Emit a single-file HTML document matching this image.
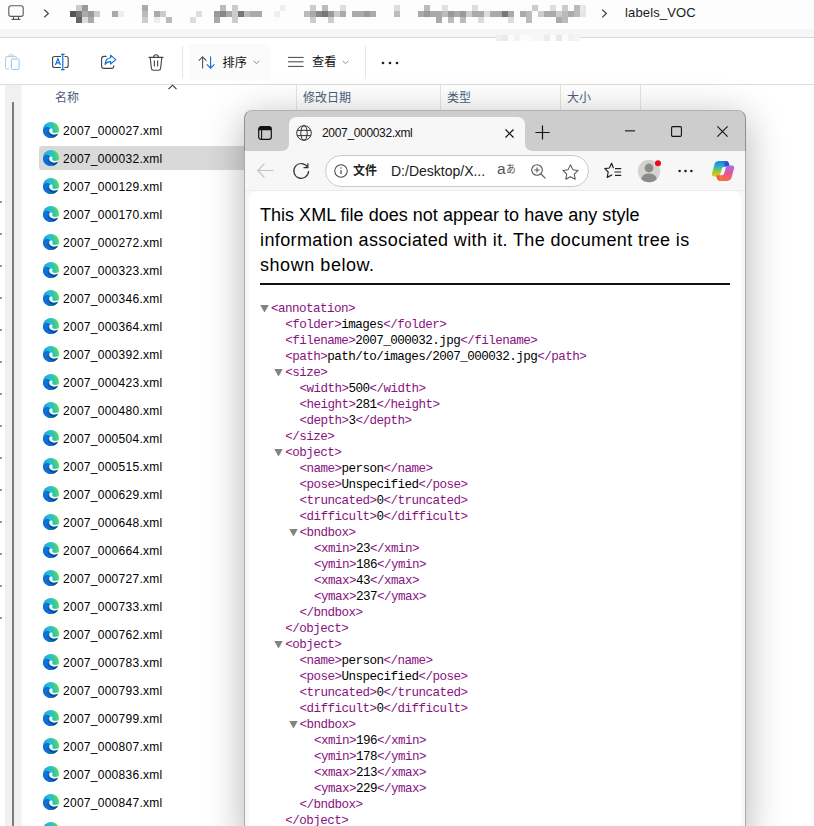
<!DOCTYPE html>
<html><head><meta charset="utf-8"><title>labels_VOC</title>
<style>
html,body{margin:0;padding:0}
html{width:814px;height:826px;overflow:hidden;background:#fff}
body{width:814px;height:826px;overflow:hidden;background:#fff;position:relative;font-family:"Liberation Sans",sans-serif;color:#000}
.abs{position:absolute;display:block}
#crumb i{position:absolute;width:6px;height:6px;display:block}
.fn{position:absolute;left:63px;font-size:12px;line-height:18px;height:18px;white-space:nowrap;color:#000;letter-spacing:.27px}
.xl{position:absolute;font-family:"Liberation Mono",monospace;font-size:12.6px;letter-spacing:-.56px;line-height:16px;height:16px;white-space:pre;color:#000}
.xl b{font-weight:normal;color:#881280}
.dot{position:absolute;left:0;width:2px;height:2px;background:#8c98a4;display:block}
.vsep{position:absolute;width:1px;background:#e5e5e5}
.cjk{font-family:"Liberation Sans","Noto Sans CJK SC",sans-serif;white-space:nowrap}
</style></head><body>
<div id="root" style="position:absolute;left:0;top:0;width:814px;height:826px;overflow:hidden;background:#fff">
<svg width="0" height="0" style="position:absolute"><defs>
<linearGradient id="eg1" x1="0" y1="0.65" x2="1" y2="0.38"><stop offset="0" stop-color="#1583dc"/><stop offset=".4" stop-color="#27b6e2"/><stop offset=".68" stop-color="#2cc4b8"/><stop offset="1" stop-color="#5fe03c"/></linearGradient>
<linearGradient id="eg2" x1="0" y1="0" x2="1" y2="1"><stop offset="0" stop-color="#1565c0"/><stop offset=".6" stop-color="#0c4c9c"/><stop offset="1" stop-color="#0a3a88"/></linearGradient>
<symbol id="edge" viewBox="0 0 16 16">
<circle cx="8" cy="8" r="8" fill="url(#eg1)"/>
<path d="M0 8.6C0.300 5.600 3.400 4.200 6 5.200C4.800 6.400 4.400 8.400 5 10.400C5.800 13.200 8.200 15 11.400 15.200C10.400 15.800 9.200 16 8 16C3.400 16 -0.200 12.400 0 8.600Z" fill="#0f6fd2"/>
<path d="M5.600 5.600C4.400 7.200 4.200 9.600 5.200 11.600C6.400 14 8.800 15.400 11.600 15.200C13.200 14.600 14.400 13.200 15 11.500C13 12.700 10.400 12.700 8.700 11.900C6.900 11 6.100 9.800 6.100 8.400C6.100 7.600 6.400 7 6.900 6.600Z" fill="url(#eg2)"/>
<path d="M6.200 8.400C6.200 7 7.400 6.300 8.600 6.500C9.400 6.700 9.700 7.200 9.400 8C9 9 9 9.800 10 10.500C11.500 11.400 14 11 15.700 9.900C15.500 10.700 15.200 11.300 14.900 11.600C13 12.700 10.500 12.700 8.800 11.900C7 11 6.200 9.800 6.200 8.400Z" fill="#fff"/>
</symbol></defs></svg>

<!-- ===== Explorer ===== -->
<div class="abs" style="left:0;top:0;width:814px;height:29px;background:#fdfdfd"></div><div class="abs" style="left:0;top:29px;width:814px;height:8px;background:#f6f6f6"></div>
<div class="abs" style="left:0;top:37px;width:814px;height:1px;background:#dadada"></div>
<div class="abs" style="left:0;top:84px;width:814px;height:1px;background:#dddddd"></div>
<div class="abs" style="left:496px;top:35px;width:84px;height:6px;background:#fcfcfc"></div><div class="abs" style="left:496px;top:35px;width:6px;height:6px;background:#efefef"></div><div class="abs" style="left:502px;top:35px;width:6px;height:6px;background:#eaeaea"></div><div class="abs" style="left:514px;top:35px;width:6px;height:6px;background:#f3f3f3"></div><div class="abs" style="left:532px;top:35px;width:6px;height:6px;background:#f7f7f7"></div><div class="abs" style="left:538px;top:35px;width:6px;height:6px;background:#f7f7f7"></div><div class="abs" style="left:544px;top:35px;width:6px;height:6px;background:#ececec"></div><div class="abs" style="left:556px;top:35px;width:6px;height:6px;background:#e8e8e8"></div><div class="abs" style="left:568px;top:35px;width:6px;height:6px;background:#f1f1f1"></div><div class="abs" style="left:574px;top:35px;width:6px;height:6px;background:#f5f5f5"></div>
<div id="crumb"><i style="left:76px;top:5px;background:#ccc"></i><i style="left:82px;top:5px;background:#999"></i><i style="left:142px;top:5px;background:#aaa"></i><i style="left:220px;top:5px;background:#bbb"></i><i style="left:232px;top:5px;background:#ccc"></i><i style="left:280px;top:5px;background:#f0f0f0"></i><i style="left:310px;top:5px;background:#ccc"></i><i style="left:322px;top:5px;background:#bbb"></i><i style="left:340px;top:5px;background:#ddd"></i><i style="left:394px;top:5px;background:#ddd"></i><i style="left:424px;top:5px;background:#bbb"></i><i style="left:442px;top:5px;background:#e0e0e0"></i><i style="left:472px;top:5px;background:#ddd"></i><i style="left:532px;top:5px;background:#ccc"></i><i style="left:550px;top:5px;background:#ddd"></i><i style="left:562px;top:5px;background:#ccc"></i><i style="left:574px;top:5px;background:#bbb"></i><i style="left:580px;top:5px;background:#e8e8e8"></i><i style="left:70px;top:11px;background:#555"></i><i style="left:76px;top:11px;background:#777"></i><i style="left:82px;top:11px;background:#aaa"></i><i style="left:88px;top:11px;background:#999"></i><i style="left:94px;top:11px;background:#ccc"></i><i style="left:112px;top:11px;background:#aaa"></i><i style="left:118px;top:11px;background:#eee"></i><i style="left:142px;top:11px;background:#bbb"></i><i style="left:154px;top:11px;background:#aaa"></i><i style="left:160px;top:11px;background:#ccc"></i><i style="left:196px;top:11px;background:#ddd"></i><i style="left:214px;top:11px;background:#999"></i><i style="left:220px;top:11px;background:#888"></i><i style="left:226px;top:11px;background:#aaa"></i><i style="left:232px;top:11px;background:#ccc"></i><i style="left:238px;top:11px;background:#777"></i><i style="left:244px;top:11px;background:#bbb"></i><i style="left:250px;top:11px;background:#aaa"></i><i style="left:256px;top:11px;background:#aaa"></i><i style="left:274px;top:11px;background:#eee"></i><i style="left:304px;top:11px;background:#bbb"></i><i style="left:310px;top:11px;background:#aaa"></i><i style="left:316px;top:11px;background:#888"></i><i style="left:322px;top:11px;background:#777"></i><i style="left:328px;top:11px;background:#999"></i><i style="left:334px;top:11px;background:#ccc"></i><i style="left:340px;top:11px;background:#aaa"></i><i style="left:352px;top:11px;background:#aaa"></i><i style="left:358px;top:11px;background:#aaa"></i><i style="left:364px;top:11px;background:#999"></i><i style="left:370px;top:11px;background:#aaa"></i><i style="left:394px;top:11px;background:#bbb"></i><i style="left:418px;top:11px;background:#aaa"></i><i style="left:424px;top:11px;background:#999"></i><i style="left:430px;top:11px;background:#aaa"></i><i style="left:436px;top:11px;background:#aaa"></i><i style="left:442px;top:11px;background:#bbb"></i><i style="left:448px;top:11px;background:#999"></i><i style="left:454px;top:11px;background:#aaa"></i><i style="left:460px;top:11px;background:#999"></i><i style="left:466px;top:11px;background:#ccc"></i><i style="left:472px;top:11px;background:#aaa"></i><i style="left:478px;top:11px;background:#aaa"></i><i style="left:484px;top:11px;background:#ddd"></i><i style="left:490px;top:11px;background:#aaa"></i><i style="left:496px;top:11px;background:#aaa"></i><i style="left:502px;top:11px;background:#777"></i><i style="left:508px;top:11px;background:#aaa"></i><i style="left:520px;top:11px;background:#aaa"></i><i style="left:526px;top:11px;background:#bbb"></i><i style="left:538px;top:11px;background:#ccc"></i><i style="left:544px;top:11px;background:#aaa"></i><i style="left:550px;top:11px;background:#aaa"></i><i style="left:556px;top:11px;background:#ccc"></i><i style="left:562px;top:11px;background:#bbb"></i><i style="left:568px;top:11px;background:#aaa"></i><i style="left:574px;top:11px;background:#bbb"></i><i style="left:580px;top:11px;background:#e5e5e5"></i><i style="left:76px;top:17px;background:#666"></i><i style="left:82px;top:17px;background:#ddd"></i><i style="left:88px;top:17px;background:#aaa"></i><i style="left:142px;top:17px;background:#ccc"></i><i style="left:154px;top:17px;background:#eee"></i><i style="left:166px;top:17px;background:#bbb"></i><i style="left:190px;top:17px;background:#ddd"></i><i style="left:214px;top:17px;background:#aaa"></i><i style="left:232px;top:17px;background:#ccc"></i><i style="left:310px;top:17px;background:#ccc"></i><i style="left:328px;top:17px;background:#ccc"></i><i style="left:436px;top:17px;background:#aaa"></i><i style="left:448px;top:17px;background:#bbb"></i><i style="left:460px;top:17px;background:#bbb"></i><i style="left:478px;top:17px;background:#ddd"></i><i style="left:508px;top:17px;background:#ddd"></i><i style="left:526px;top:17px;background:#bbb"></i><i style="left:556px;top:17px;background:#aaa"></i><i style="left:562px;top:17px;background:#bbb"></i></div>
<!-- monitor icon -->
<svg class="abs" style="left:8px;top:5px" width="16" height="16" viewBox="0 0 16 16" fill="none" stroke="#5a5a5a" stroke-width="1.1"><rect x="0.8" y="0.8" width="14.4" height="10.6" rx="2.2"/><path d="M5.5 11.6V14M10.5 11.6V14M3.6 14.4H12.4"/></svg>
<svg class="abs" style="left:43px;top:9px" width="7" height="9" viewBox="0 0 7 9" fill="none" stroke="#333" stroke-width="1.1"><path d="M1.2 0.6L5.4 4.5L1.2 8.4"/></svg>
<svg class="abs" style="left:601px;top:9px" width="7" height="9" viewBox="0 0 7 9" fill="none" stroke="#333" stroke-width="1.1"><path d="M1.2 0.6L5.4 4.5L1.2 8.4"/></svg>
<div class="abs" style="left:625px;top:4px;font-size:13px;line-height:18px;color:#1b1b1b;white-space:nowrap;letter-spacing:.15px">labels_VOC</div>

<!-- toolbar icons -->
<svg class="abs" style="left:5px;top:54px" width="15" height="16" viewBox="0 0 15 16" fill="none" stroke-width="1"><path d="M4 2.5H2.2Q0.6 2.5 0.6 4.1V13.4Q0.6 15 2.2 15H4" stroke="#c4c4c4"/><path d="M3.6 2.6Q3.6 0.8 5.4 0.8H7Q8.8 0.8 8.8 2.6Z" stroke="#c4c4c4"/><path d="M9 2.5H10.2Q11.6 2.5 11.6 4" stroke="#c4c4c4"/><rect x="6.300" y="5" width="7.800" height="10.400" rx="1.2" stroke="#93c4ee" fill="#fff"/></svg>
<svg class="abs" style="left:52px;top:53px" width="17" height="18" viewBox="0 0 17 18" fill="none"><path d="M9 3.5H2.6Q0.6 3.5 0.6 5.5V12.5Q0.6 14.5 2.6 14.5H9M12.5 3.5H14.2Q16.2 3.5 16.2 5.5V12.5Q16.2 14.5 14.2 14.5H12.5" stroke="#444" stroke-width="1.1"/><path d="M10.8 1.6V16.400M9 1.4H12.6M9 16.600H12.6" stroke="#0a6fd6" stroke-width="1.2"/><path d="M3.4 12L5.9 5.6L8.4 12M4.3 9.9H7.5" stroke="#0a6fd6" stroke-width="1.1"/></svg>
<svg class="abs" style="left:101px;top:54px" width="16" height="16" viewBox="0 0 16 16" fill="none"><path d="M5.4 2.4H3Q0.6 2.4 0.6 4.8V12Q0.6 14.4 3 14.4H10.4Q12.8 14.4 12.8 12V11.4" stroke="#444" stroke-width="1.1"/><path d="M9.6 1.2L14.8 5.6L9.6 10V7.6Q5.8 7.4 4 10.4Q4.4 4.4 9.6 3.8Z" stroke="#0a6fd6" stroke-width="1.1" stroke-linejoin="round"/></svg>
<svg class="abs" style="left:148px;top:54px" width="16" height="17" viewBox="0 0 16 17" fill="none" stroke="#444" stroke-width="1.1"><path d="M0.6 3.4H15.4M5.6 3.2Q5.6 0.8 8 0.8Q10.4 0.8 10.4 3.2M2.2 3.6L3.4 14.4Q3.6 16.2 5.4 16.2H10.6Q12.4 16.2 12.6 14.4L13.8 3.6M6.4 6.6V12.6M9.6 6.6V12.6"/></svg>
<div class="vsep" style="left:182px;top:46px;height:32px"></div>
<div class="abs" style="left:189px;top:44px;width:82px;height:36px;background:#fbfbfb;border-radius:4px"></div>
<svg class="abs" style="left:198px;top:56px" width="18" height="13" viewBox="0 0 18 13" fill="none" stroke-width="1.1"><path d="M4.6 12.4V1M0.8 4.6L4.6 0.8L8.4 4.6" stroke="#555"/><path d="M12.6 0.6V12M8.8 8.4L12.6 12.2L16.4 8.4" stroke="#0a6fd6"/></svg>
<div class="abs cjk" style="left:222.6px;top:55.6px;font-size:12.2px;line-height:14.64px;height:14.64px;color:#111">排序</div>
<svg class="abs" style="left:253px;top:60px" width="7" height="5" viewBox="0 0 7 5" fill="none" stroke="#8a8a8a" stroke-width="1"><path d="M0.6 0.8L3.5 3.7L6.4 0.8"/></svg>
<svg class="abs" style="left:288px;top:56px" width="16" height="11" viewBox="0 0 16 11" fill="none" stroke="#444" stroke-width="1"><path d="M0 1.4H15.6M0 5.800H15.6M0 10.400H15.6"/></svg>
<div class="abs cjk" style="left:312px;top:55.4px;font-size:12.2px;line-height:14.64px;height:14.64px;color:#111">查看</div>
<svg class="abs" style="left:342px;top:60px" width="7" height="5" viewBox="0 0 7 5" fill="none" stroke="#8a8a8a" stroke-width="1"><path d="M0.6 0.8L3.5 3.7L6.4 0.8"/></svg>
<div class="vsep" style="left:365px;top:46px;height:32px"></div>
<svg class="abs" style="left:381px;top:61px" width="18" height="4" viewBox="0 0 18 4" fill="#222"><circle cx="2" cy="2" r="1.35"/><circle cx="9" cy="2" r="1.35"/><circle cx="16" cy="2" r="1.35"/></svg>

<!-- left nav strip -->
<div class="abs" style="left:5px;top:85px;width:16px;height:741px;background:#f0f0f0"></div>
<div class="abs" style="left:21px;top:85px;width:2px;height:741px;background:#fafafa"></div>
<div class="abs" style="left:12px;top:102px;width:2px;height:724px;background:#7b7b7b"></div>
<i class="dot" style="top:201px"></i><i class="dot" style="top:233px"></i><i class="dot" style="top:265px"></i><i class="dot" style="top:297px"></i><i class="dot" style="top:329px"></i><i class="dot" style="top:361px"></i><i class="dot" style="top:393px"></i><i class="dot" style="top:425px"></i><i class="dot" style="top:457px"></i><i class="dot" style="top:489px"></i><i class="dot" style="top:521px"></i><i class="dot" style="top:553px"></i><i class="dot" style="top:585px"></i><i class="dot" style="top:617px"></i>

<!-- column header -->
<svg class="abs" style="left:168px;top:84px" width="9" height="6" viewBox="0 0 9 6" fill="none" stroke="#333" stroke-width="1.1"><path d="M0.5 5.2L4.5 1.2L8.5 5.2"/></svg>
<div class="abs cjk" style="left:55px;top:91.2px;font-size:12px;line-height:14.4px;height:14.4px;color:#4c607a">名称</div>
<div class="abs cjk" style="left:303px;top:91.2px;font-size:12px;line-height:14.4px;height:14.4px;color:#4c607a">修改日期</div>
<div class="abs cjk" style="left:447px;top:91.2px;font-size:12px;line-height:14.4px;height:14.4px;color:#4c607a">类型</div>
<div class="abs cjk" style="left:567px;top:91.2px;font-size:12px;line-height:14.4px;height:14.4px;color:#4c607a">大小</div>
<div class="vsep" style="left:296px;top:85px;height:26px"></div>
<div class="vsep" style="left:440px;top:85px;height:26px"></div>
<div class="vsep" style="left:560px;top:85px;height:26px"></div>
<div class="vsep" style="left:640px;top:85px;height:26px"></div>

<!-- file rows -->
<div class="abs" style="left:39px;top:146px;width:220px;height:24px;background:#d9d9d9;border-radius:3px"></div>
<svg class="abs" style="left:43px;top:122px" width="16" height="16" viewBox="0 0 16 16"><use href="#edge"/></svg><div class="fn" style="top:122px">2007_000027.xml</div><svg class="abs" style="left:43px;top:150px" width="16" height="16" viewBox="0 0 16 16"><use href="#edge"/></svg><div class="fn" style="top:150px">2007_000032.xml</div><svg class="abs" style="left:43px;top:178px" width="16" height="16" viewBox="0 0 16 16"><use href="#edge"/></svg><div class="fn" style="top:178px">2007_000129.xml</div><svg class="abs" style="left:43px;top:206px" width="16" height="16" viewBox="0 0 16 16"><use href="#edge"/></svg><div class="fn" style="top:206px">2007_000170.xml</div><svg class="abs" style="left:43px;top:234px" width="16" height="16" viewBox="0 0 16 16"><use href="#edge"/></svg><div class="fn" style="top:234px">2007_000272.xml</div><svg class="abs" style="left:43px;top:262px" width="16" height="16" viewBox="0 0 16 16"><use href="#edge"/></svg><div class="fn" style="top:262px">2007_000323.xml</div><svg class="abs" style="left:43px;top:290px" width="16" height="16" viewBox="0 0 16 16"><use href="#edge"/></svg><div class="fn" style="top:290px">2007_000346.xml</div><svg class="abs" style="left:43px;top:318px" width="16" height="16" viewBox="0 0 16 16"><use href="#edge"/></svg><div class="fn" style="top:318px">2007_000364.xml</div><svg class="abs" style="left:43px;top:346px" width="16" height="16" viewBox="0 0 16 16"><use href="#edge"/></svg><div class="fn" style="top:346px">2007_000392.xml</div><svg class="abs" style="left:43px;top:374px" width="16" height="16" viewBox="0 0 16 16"><use href="#edge"/></svg><div class="fn" style="top:374px">2007_000423.xml</div><svg class="abs" style="left:43px;top:402px" width="16" height="16" viewBox="0 0 16 16"><use href="#edge"/></svg><div class="fn" style="top:402px">2007_000480.xml</div><svg class="abs" style="left:43px;top:430px" width="16" height="16" viewBox="0 0 16 16"><use href="#edge"/></svg><div class="fn" style="top:430px">2007_000504.xml</div><svg class="abs" style="left:43px;top:458px" width="16" height="16" viewBox="0 0 16 16"><use href="#edge"/></svg><div class="fn" style="top:458px">2007_000515.xml</div><svg class="abs" style="left:43px;top:486px" width="16" height="16" viewBox="0 0 16 16"><use href="#edge"/></svg><div class="fn" style="top:486px">2007_000629.xml</div><svg class="abs" style="left:43px;top:514px" width="16" height="16" viewBox="0 0 16 16"><use href="#edge"/></svg><div class="fn" style="top:514px">2007_000648.xml</div><svg class="abs" style="left:43px;top:542px" width="16" height="16" viewBox="0 0 16 16"><use href="#edge"/></svg><div class="fn" style="top:542px">2007_000664.xml</div><svg class="abs" style="left:43px;top:570px" width="16" height="16" viewBox="0 0 16 16"><use href="#edge"/></svg><div class="fn" style="top:570px">2007_000727.xml</div><svg class="abs" style="left:43px;top:598px" width="16" height="16" viewBox="0 0 16 16"><use href="#edge"/></svg><div class="fn" style="top:598px">2007_000733.xml</div><svg class="abs" style="left:43px;top:626px" width="16" height="16" viewBox="0 0 16 16"><use href="#edge"/></svg><div class="fn" style="top:626px">2007_000762.xml</div><svg class="abs" style="left:43px;top:654px" width="16" height="16" viewBox="0 0 16 16"><use href="#edge"/></svg><div class="fn" style="top:654px">2007_000783.xml</div><svg class="abs" style="left:43px;top:682px" width="16" height="16" viewBox="0 0 16 16"><use href="#edge"/></svg><div class="fn" style="top:682px">2007_000793.xml</div><svg class="abs" style="left:43px;top:710px" width="16" height="16" viewBox="0 0 16 16"><use href="#edge"/></svg><div class="fn" style="top:710px">2007_000799.xml</div><svg class="abs" style="left:43px;top:738px" width="16" height="16" viewBox="0 0 16 16"><use href="#edge"/></svg><div class="fn" style="top:738px">2007_000807.xml</div><svg class="abs" style="left:43px;top:766px" width="16" height="16" viewBox="0 0 16 16"><use href="#edge"/></svg><div class="fn" style="top:766px">2007_000836.xml</div><svg class="abs" style="left:43px;top:794px" width="16" height="16" viewBox="0 0 16 16"><use href="#edge"/></svg><div class="fn" style="top:794px">2007_000847.xml</div><svg class="abs" style="left:43px;top:822px" width="16" height="16" viewBox="0 0 16 16"><use href="#edge"/></svg><div class="fn" style="top:822px">2007_000876.xml</div>

<!-- ===== Edge window ===== -->
<div id="edge-win" class="abs" style="left:244px;top:110px;width:502px;height:730px;border-radius:8px 8px 0 0;background:#f7f7f7;box-shadow:0 8px 38px rgba(0,0,0,.30);overflow:hidden">
  <div class="abs" style="left:0;top:0;width:502px;height:41px;background:#cdcdcd"></div>
  <!-- tab -->
  <svg class="abs" style="left:37px;top:7px" width="252" height="34" viewBox="0 0 252 34"><path d="M0 34Q8 34 8 26V8Q8 0 16 0H236Q244 0 244 8V26Q244 34 252 34Z" fill="#f7f7f7"/></svg>
  <!-- tab actions icon -->
  <svg class="abs" style="left:14px;top:16px" width="14" height="14" viewBox="0 0 14 14" fill="none" stroke="#111" stroke-width="1.2"><rect x="0.7" y="0.7" width="12.6" height="12.6" rx="2.4"/><path d="M1 2.6H13" stroke-width="3.4"/><path d="M3.6 3V13.2" stroke-width="1.1"/></svg>
  <!-- globe -->
  <svg class="abs" style="left:52px;top:15px" width="16" height="16" viewBox="0 0 16 16" fill="none" stroke="#333" stroke-width="1"><circle cx="8" cy="8" r="7.3"/><ellipse cx="8" cy="8" rx="3.2" ry="7.3"/><path d="M1.2 5.4H14.8M1.2 10.6H14.8"/></svg>
  <div class="abs" style="left:78px;top:14px;font-size:12px;line-height:18px;color:#111;white-space:nowrap;letter-spacing:-.33px">2007_000032.xml</div>
  <svg class="abs" style="left:261px;top:19px" width="9" height="9" viewBox="0 0 9 9" fill="none" stroke="#111" stroke-width="1.2"><path d="M0.5 0.5L8.5 8.5M8.5 0.5L0.5 8.5"/></svg>
  <svg class="abs" style="left:291px;top:15px" width="15" height="15" viewBox="0 0 15 15" fill="none" stroke="#111" stroke-width="1.2"><path d="M7.5 0.4V14.6M0.4 7.5H14.6"/></svg>
  <svg class="abs" style="left:381px;top:20px" width="10" height="2" viewBox="0 0 10 2"><rect width="10" height="1.1" y="0.3" fill="#111"/></svg>
  <svg class="abs" style="left:426.500px;top:15.500px" width="11" height="11" viewBox="0 0 11 11" fill="none" stroke="#111" stroke-width="1.1"><rect x="0.6" y="0.6" width="9.8" height="9.8" rx="1.2"/></svg>
  <svg class="abs" style="left:472.500px;top:15.500px" width="11" height="11" viewBox="0 0 11 11" fill="none" stroke="#111" stroke-width="1.1"><path d="M0.4 0.4L10.6 10.6M10.6 0.4L0.4 10.6"/></svg>
  <!-- nav -->
  <svg class="abs" style="left:13px;top:53px" width="17" height="15" viewBox="0 0 17 15" fill="none" stroke="#c3c3c3" stroke-width="1.2"><path d="M7.4 0.6L0.8 7.5L7.4 14.4M0.8 7.5H16.6"/></svg>
  <svg class="abs" style="left:48px;top:52px" width="18" height="18" viewBox="0 0 18 18" fill="none" stroke="#333" stroke-width="1.2"><path d="M15.6 5.2A7.4 7.4 0 1 0 16.6 9"/><path d="M15.9 1.2V5.6H11.5"/></svg>
  <!-- address pill -->
  <div class="abs" style="left:81px;top:45px;width:262px;height:30px;border:1px solid #c9c9c9;border-radius:16px;background:#fff"></div>
  <svg class="abs" style="left:89.500px;top:54px" width="14" height="14" viewBox="0 0 15 15" fill="none" stroke="#444" stroke-width="1.1"><circle cx="7.5" cy="7.5" r="6.7"/><path d="M7.5 6.6V10.8" stroke-width="1.3"/><circle cx="7.5" cy="4.4" r="0.8" fill="#444" stroke="none"/></svg>
  <div class="abs cjk" style="left:109px;top:53.6px;font-size:12px;line-height:14.4px;height:14.4px;font-weight:bold;color:#222">文件</div>
  <div class="abs" style="left:147px;top:51px;font-size:14px;line-height:20px;color:#1b1b1b;white-space:nowrap">D:/Desktop/X...</div>
  <div class="abs" style="left:252.9px;top:50.3px;font-size:15.5px;line-height:18.6px;height:18.6px;color:#555;white-space:nowrap">a</div><div class="abs" style="left:262.2px;top:53.3px;font-family:'Liberation Sans','Noto Sans CJK JP',sans-serif;font-size:11.5px;line-height:13.8px;height:13.8px;color:#555;white-space:nowrap;transform:scaleX(.85);transform-origin:0 0">あ</div>
  <svg class="abs" style="left:287px;top:54px" width="15" height="15" viewBox="0 0 15 15" fill="none" stroke="#555" stroke-width="1.1"><circle cx="6" cy="6" r="5.3"/><path d="M10 10L14.4 14.4M3.4 6H8.6M6 3.4V8.6"/></svg>
  <svg class="abs" style="left:317.500px;top:53.500px" width="17" height="16" viewBox="0 0 18 17" fill="none" stroke="#555" stroke-width="1.1" stroke-linejoin="round"><path d="M9 0.9L11.5 6L17.1 6.8L13 10.7L14 16.2L9 13.6L4 16.2L5 10.7L0.9 6.8L6.5 6Z"/></svg>
  <!-- favorites -->
  <svg class="abs" style="left:360px;top:52px" width="18" height="17" viewBox="0 0 18 17" fill="none" stroke="#222" stroke-width="1.2" stroke-linejoin="round"><path d="M9.5 6.2L7.6 1.2L5.4 6L0.8 6.6L4.2 10L3.2 15.4L8.2 12.8"/><path d="M11 6.6H17.2M10.4 10H17.2M11 13.4H17.2" stroke-width="1.1"/></svg>
  <!-- avatar -->
  <svg class="abs" style="left:393px;top:49px" width="24" height="24" viewBox="0 0 24 24"><defs><clipPath id="avc"><circle cx="12" cy="12" r="11.2"/></clipPath></defs><circle cx="12" cy="12" r="11.2" fill="#d5d3d1"/><g clip-path="url(#avc)" fill="#8d8b89"><circle cx="12" cy="9" r="4.4"/><path d="M3.6 24Q3.6 14.6 12 14.6Q20.400 14.6 20.400 24Z"/></g><circle cx="21" cy="4.300" r="3" fill="#ea0a1e"/></svg>
  <svg class="abs" style="left:434px;top:59px" width="15" height="4" viewBox="0 0 15 4" fill="#222"><circle cx="1.6" cy="2" r="1.3"/><circle cx="7.5" cy="2" r="1.3"/><circle cx="13.400" cy="2" r="1.3"/></svg>
  <!-- copilot -->
  <svg class="abs" style="left:467px;top:50px" width="24" height="22" viewBox="0 0 24 22"><defs>
   <linearGradient id="cp1" x1="0" y1="0" x2="0" y2="1"><stop offset="0" stop-color="#1d7fe8"/><stop offset=".35" stop-color="#27b4c8"/><stop offset=".7" stop-color="#9ccc2e"/><stop offset="1" stop-color="#f7c21d"/></linearGradient>
   <linearGradient id="cp2" x1="0" y1="0" x2="0" y2="1"><stop offset="0" stop-color="#a56cf0"/><stop offset=".5" stop-color="#e0569c"/><stop offset="1" stop-color="#f7703c"/></linearGradient>
   <linearGradient id="cp3" x1="0" y1="0" x2="1" y2="0"><stop offset="0" stop-color="#2f66e0"/><stop offset="1" stop-color="#1747c4"/></linearGradient>
   <linearGradient id="cp4" x1="0" y1="0" x2="1" y2="0"><stop offset="0" stop-color="#f04a2a"/><stop offset="1" stop-color="#f78a3a"/></linearGradient>
  </defs>
  <path d="M8.6 1H14.6Q17 1 17.600 3.400L18.400 6.600H13.600Q11.400 6.600 10.800 8.800L9.200 14.400Q8.600 16.400 6.600 16.400H3Q0.400 16.400 1 13.600L3.400 4.400Q4.200 1 8.600 1Z" fill="url(#cp1)"/>
  <path d="M13.400 1H15Q17.400 1 18 3.400L18.800 6.600H14.200Q13 6.600 12.400 7.400Q13.400 3 13.400 1Z" fill="url(#cp3)"/>
  <path d="M15.400 21H9.400Q7 21 6.400 18.600L5.600 15.400H10.400Q12.600 15.400 13.200 13.200L14.800 7.600Q15.400 5.600 17.400 5.600H21Q23.600 5.600 23 8.400L20.600 17.600Q19.800 21 15.400 21Z" fill="url(#cp2)"/>
  <path d="M10.600 21H9Q6.600 21 6 18.600L5.200 15.400H9.800Q11 15.400 11.600 14.600Q10.600 19 10.600 21Z" fill="url(#cp4)"/>
  </svg>
  <!-- content -->
  <div class="abs" style="left:0;top:80px;width:502px;height:1px;background:#ececec"></div>
  <div class="abs" style="left:5px;top:81px;width:492px;height:660px;background:#fff;border-radius:8px 8px 0 0"></div>
  <div class="abs" style="left:0;top:0;width:500px;height:740px;border:1px solid rgba(0,0,0,.3);border-top-color:rgba(0,0,0,.13);border-radius:8px 8px 0 0"></div>
</div>
<!-- page text (absolute, body coords) -->
<div class="abs" id="msg" style="left:260px;top:203px;width:480px;font-size:18px;line-height:25px;color:#000;letter-spacing:0px"><span style="letter-spacing:.02px">This XML file does not appear to have any style</span><br><span style="letter-spacing:.38px">information associated with it. The document tree is</span><br><span style="letter-spacing:.55px">shown below.</span></div>
<div class="abs" style="left:260px;top:283px;width:470px;height:2px;background:#111"></div>
<svg class="abs" style="left:260.0px;top:304.5px" width="9" height="7.5" viewBox="0 0 9 8"><path d="M0 0H9L4.5 8Z" fill="#838383"/></svg><div class="xl" style="left:271.0px;top:301px"><b>&lt;annotation&gt;</b></div><div class="xl" style="left:285.3px;top:317px"><b>&lt;folder&gt;</b>images<b>&lt;/folder&gt;</b></div><div class="xl" style="left:285.3px;top:333px"><b>&lt;filename&gt;</b>2007_000032.jpg<b>&lt;/filename&gt;</b></div><div class="xl" style="left:285.3px;top:349px"><b>&lt;path&gt;</b>path/to/images/2007_000032.jpg<b>&lt;/path&gt;</b></div><svg class="abs" style="left:274.3px;top:368.5px" width="9" height="7.5" viewBox="0 0 9 8"><path d="M0 0H9L4.5 8Z" fill="#838383"/></svg><div class="xl" style="left:285.3px;top:365px"><b>&lt;size&gt;</b></div><div class="xl" style="left:299.6px;top:381px"><b>&lt;width&gt;</b>500<b>&lt;/width&gt;</b></div><div class="xl" style="left:299.6px;top:397px"><b>&lt;height&gt;</b>281<b>&lt;/height&gt;</b></div><div class="xl" style="left:299.6px;top:413px"><b>&lt;depth&gt;</b>3<b>&lt;/depth&gt;</b></div><div class="xl" style="left:285.3px;top:429px"><b>&lt;/size&gt;</b></div><svg class="abs" style="left:274.3px;top:448.5px" width="9" height="7.5" viewBox="0 0 9 8"><path d="M0 0H9L4.5 8Z" fill="#838383"/></svg><div class="xl" style="left:285.3px;top:445px"><b>&lt;object&gt;</b></div><div class="xl" style="left:299.6px;top:461px"><b>&lt;name&gt;</b>person<b>&lt;/name&gt;</b></div><div class="xl" style="left:299.6px;top:477px"><b>&lt;pose&gt;</b>Unspecified<b>&lt;/pose&gt;</b></div><div class="xl" style="left:299.6px;top:493px"><b>&lt;truncated&gt;</b>0<b>&lt;/truncated&gt;</b></div><div class="xl" style="left:299.6px;top:509px"><b>&lt;difficult&gt;</b>0<b>&lt;/difficult&gt;</b></div><svg class="abs" style="left:288.6px;top:528.5px" width="9" height="7.5" viewBox="0 0 9 8"><path d="M0 0H9L4.5 8Z" fill="#838383"/></svg><div class="xl" style="left:299.6px;top:525px"><b>&lt;bndbox&gt;</b></div><div class="xl" style="left:313.9px;top:541px"><b>&lt;xmin&gt;</b>23<b>&lt;/xmin&gt;</b></div><div class="xl" style="left:313.9px;top:557px"><b>&lt;ymin&gt;</b>186<b>&lt;/ymin&gt;</b></div><div class="xl" style="left:313.9px;top:573px"><b>&lt;xmax&gt;</b>43<b>&lt;/xmax&gt;</b></div><div class="xl" style="left:313.9px;top:589px"><b>&lt;ymax&gt;</b>237<b>&lt;/ymax&gt;</b></div><div class="xl" style="left:299.6px;top:605px"><b>&lt;/bndbox&gt;</b></div><div class="xl" style="left:285.3px;top:621px"><b>&lt;/object&gt;</b></div><svg class="abs" style="left:274.3px;top:640.5px" width="9" height="7.5" viewBox="0 0 9 8"><path d="M0 0H9L4.5 8Z" fill="#838383"/></svg><div class="xl" style="left:285.3px;top:637px"><b>&lt;object&gt;</b></div><div class="xl" style="left:299.6px;top:653px"><b>&lt;name&gt;</b>person<b>&lt;/name&gt;</b></div><div class="xl" style="left:299.6px;top:669px"><b>&lt;pose&gt;</b>Unspecified<b>&lt;/pose&gt;</b></div><div class="xl" style="left:299.6px;top:685px"><b>&lt;truncated&gt;</b>0<b>&lt;/truncated&gt;</b></div><div class="xl" style="left:299.6px;top:701px"><b>&lt;difficult&gt;</b>0<b>&lt;/difficult&gt;</b></div><svg class="abs" style="left:288.6px;top:720.5px" width="9" height="7.5" viewBox="0 0 9 8"><path d="M0 0H9L4.5 8Z" fill="#838383"/></svg><div class="xl" style="left:299.6px;top:717px"><b>&lt;bndbox&gt;</b></div><div class="xl" style="left:313.9px;top:733px"><b>&lt;xmin&gt;</b>196<b>&lt;/xmin&gt;</b></div><div class="xl" style="left:313.9px;top:749px"><b>&lt;ymin&gt;</b>178<b>&lt;/ymin&gt;</b></div><div class="xl" style="left:313.9px;top:765px"><b>&lt;xmax&gt;</b>213<b>&lt;/xmax&gt;</b></div><div class="xl" style="left:313.9px;top:781px"><b>&lt;ymax&gt;</b>229<b>&lt;/ymax&gt;</b></div><div class="xl" style="left:299.6px;top:797px"><b>&lt;/bndbox&gt;</b></div><div class="xl" style="left:285.3px;top:813px"><b>&lt;/object&gt;</b></div>
</div>
</body></html>
